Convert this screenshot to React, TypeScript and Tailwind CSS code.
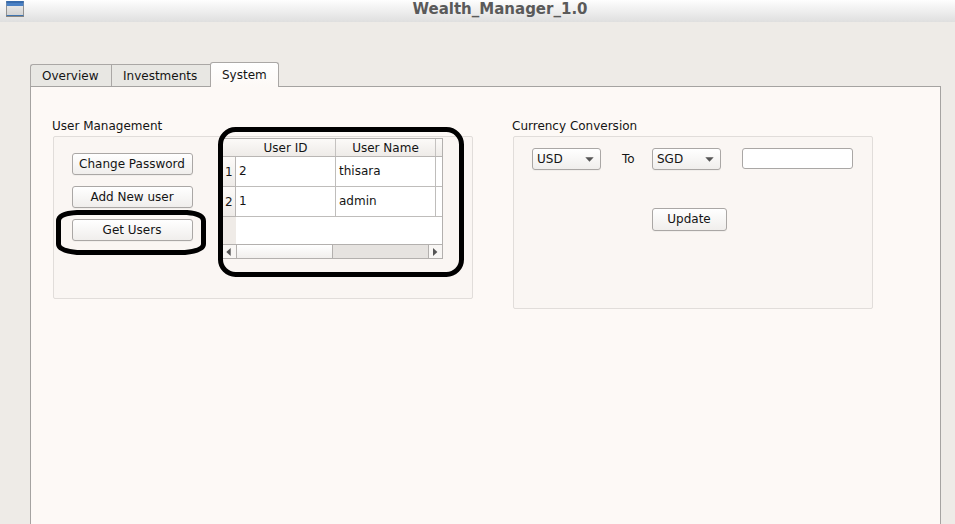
import type { ReactNode } from "react";

const buttonLook =
  "box-border rounded-[3px] border border-[#aaa7a5] bg-gradient-to-b from-white to-[#f0eeec] shadow-[0_1px_0_#f1eeeb]";

function PushButton({ children, size }: { children: ReactNode; size: string }) {
  return (
    <button className={`flex items-center justify-center pr-px pb-px ${buttonLook} ${size}`}>
      {children}
    </button>
  );
}

function Combo({ value }: { value: string }) {
  return (
    <button className={`flex h-[22px] w-[69px] items-center justify-between pr-[6px] pb-px pl-[4px] ${buttonLook}`}>
      {value}
      <svg width="9" height="5" viewBox="0 0 9 5" className="mt-px">
        <path d="M0.3 0.3H8.7L4.5 4.7Z" fill="#555" />
      </svg>
    </button>
  );
}

function Tab({ label, look }: { label: string; look: string }) {
  return (
    <div className={`flex border-t border-[#aaa7a5] ${look}`}>
      {label}
    </div>
  );
}

function Row({ index, id, name }: { index: number; id: string; name: string }) {
  return (
    <div className="flex h-[30px]">
      <div className="w-[17px] border-r border-b border-[#b9b6b4] bg-gradient-to-b from-[#fcfaf8] to-[#eeebe8] pt-[1px] pl-[6px] leading-[29px]">
        {index}
      </div>
      <div className="w-[100px] border-r border-b border-[#bfbdbb] pl-[3px] leading-[28px]">{id}</div>
      <div className="w-[100px] border-r border-b border-[#bfbdbb] pl-[3px] leading-[28px]">{name}</div>
      <div className="w-[6px] border-b border-[#bfbdbb]" />
    </div>
  );
}

function UsersTable() {
  return (
    <div className="flex h-[121px] w-[224px] flex-col border-y border-r border-[#b3b0ae] bg-white">
      <div className="flex h-[18px] border-b border-[#b9b6b4] bg-gradient-to-b from-[#fcfaf8] to-[#eeebe8] text-center leading-[18px]">
        <div className="w-[117px] border-r border-[#c5c2c0] pl-[17px]">User ID</div>
        <div className="w-[100px] border-r border-[#c5c2c0]">User Name</div>
      </div>
      <Row index={1} id="2" name="thisara" />
      <Row index={2} id="1" name="admin" />
      <div className="h-[27px] w-[17px] bg-[#efebe7]" />
      <div className="flex h-[14px] border-t border-[#b3b0ae] bg-[#e6e3e0]">
        <div className="flex w-[18px] items-center justify-end border-r border-[#b3b0ae] bg-[#f8f6f4] pr-[5px]">
          <svg width="5" height="8" viewBox="0 0 5 8"><path d="M4.700 0V8L0.300 4Z" fill="#555" /></svg>
        </div>
        <div className="w-[96px] border-r border-[#b3b0ae] bg-gradient-to-b from-white to-[#f1efed]" />
        <div className="w-[96px] border-r border-[#b3b0ae]" />
        <div className="flex flex-1 items-center bg-[#f8f6f4] pl-[4px]">
          <svg width="5" height="8" viewBox="0 0 5 8"><path d="M0 0V8L4.400 4Z" fill="#555" /></svg>
        </div>
      </div>
    </div>
  );
}

export default function App() {
  return (
    <div className="relative flex h-[524px] w-[955px] flex-col overflow-hidden bg-[#eeebe7] font-['DejaVu_Sans',sans-serif] text-[12px] leading-[14px] text-[#141414]">
      <header className="flex h-[22px] shrink-0 bg-gradient-to-b from-[#fefefe] to-[#dfdfdf] pl-[6px]">
        <svg width="18" height="18" viewBox="0 0 18 18" className="shrink-0">
          <defs>
            <linearGradient id="window-face" x1="0" y1="0" x2="0" y2="1">
              <stop offset="0" stopColor="#f0f0f0" />
              <stop offset="1" stopColor="#cfcfcf" />
            </linearGradient>
          </defs>
          <rect x="0.5" y="1.5" width="17" height="15" fill="url(#window-face)" stroke="#929292" />
          <rect x="0.5" y="1" width="17" height="5" fill="#4a80c4" />
          <rect x="0.5" y="1" width="17" height="2" fill="#386bac" />
          <rect x="0.5" y="15" width="17" height="1" fill="#3f74ae" />
          <rect x="0" y="16" width="18" height="1" fill="#8c8780" />
        </svg>
        <h1 className="w-[952px] shrink-0 text-center text-[15px] leading-[19px] font-bold text-[#5a5a5a]">
          Wealth_Manager_1.0
        </h1>
      </header>
      <nav className="z-10 mt-[40px] ml-[30px] flex h-[25px] shrink-0 items-end">
        <Tab label="Overview" look="mb-px h-[22px] w-[81px] rounded-tl-[3px] border-l bg-[#e8e7e3] pt-[4px] pl-[11px]" />
        <Tab label="Investments" look="mb-px h-[22px] w-[99px] border-l bg-[#e8e7e3] pt-[4px] pl-[11px]" />
        <Tab label="System" look="h-[25px] w-[69px] rounded-t-[3px] border-x bg-gradient-to-b from-white to-[#fdf9f6] pt-[5px] pl-[11px]" />
      </nav>
      <main className="mt-[-1px] ml-[30px] flex h-[440px] w-[911px] shrink-0 border border-[#a5a3a1] bg-[#fdf9f6] pt-[32px] pl-[21px]">
        <section className="w-[460px]">
          <h2>User Management</h2>
          <div className="mt-[3px] ml-px flex h-[163px] w-[420px] rounded-[2px] border border-[#e1ddda] bg-[#faf6f3]">
            <div className="flex w-[165px] flex-col gap-[11px] pt-[16px] pl-[18px]">
              <PushButton size="h-[22px] w-[121px]">Change Password</PushButton>
              <PushButton size="h-[22px] w-[121px]">Add New user</PushButton>
              <PushButton size="h-[22px] w-[121px]">Get Users</PushButton>
            </div>
            <div className="pt-px">
              <UsersTable />
            </div>
          </div>
        </section>
        <section>
          <h2>Currency Conversion</h2>
          <div className="mt-[3px] ml-px h-[173px] w-[360px] rounded-[2px] border border-[#e1ddda] bg-[#faf6f3] pt-[11px] pl-[18px]">
            <div className="flex items-start">
              <Combo value="USD" />
              <span className="w-[51px] pt-[4px] pl-[21px]">To</span>
              <Combo value="SGD" />
              <input
                aria-label="Amount"
                className="ml-[21px] h-[21px] w-[111px] rounded-[3px] border border-[#aaa7a5] bg-white px-1"
              />
            </div>
            <div className="mt-[38px] ml-[120px]">
              <PushButton size="h-[23px] w-[75px]">Update</PushButton>
            </div>
          </div>
        </section>
      </main>
      <svg
        className="pointer-events-none absolute inset-0 z-20"
        width="955"
        height="524"
        viewBox="0 0 955 524"
        fill="none"
        stroke="#000"
        strokeWidth="5"
        strokeLinejoin="round"
      >
        <rect x="220.5" y="129.5" width="241" height="145" rx="15" />
        <path d="M77 212.5H187Q203.5 214 203.5 221V244Q203.5 250.500 185 252.5H77Q58.500 250.500 58.5 244V221Q58.5 213.500 77 212.5Z" />
      </svg>
    </div>
  );
}
